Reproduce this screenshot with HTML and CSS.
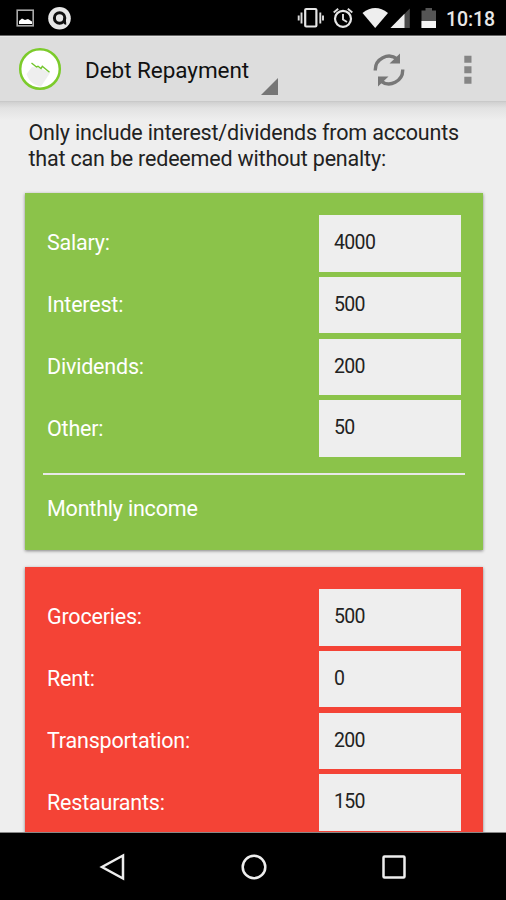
FILE: index.html
```html
<!DOCTYPE html>
<html lang="en">
<head>
<meta charset="utf-8">
<title>Debt Repayment</title>
<link rel="stylesheet" href="styles.css">
</head>
<body>
<div class="screen">
  <header class="status">
    <svg class="status-left" width="80" height="35" viewBox="0 0 80 35">
      <rect x="17.2" y="10.2" width="16" height="15.6" fill="none" stroke="#aaa" stroke-width="1.6"/>
      <path d="M19 24v-3l3-2.500 3 1.500 3-1 4 2.500v2.500z" fill="#fff"/>
      <circle cx="59.500" cy="18.300" r="11.300" fill="#e8e8e8"/>
      <circle cx="59.600" cy="18" r="5.200" fill="none" stroke="#111" stroke-width="3"/>
      <path d="M64.700 18v4q0 1.500 1.500 1.500" fill="none" stroke="#111" stroke-width="2.600"/>
    </svg>
    <svg class="status-icons" width="146" height="35" viewBox="293 0 146 35">
      <rect x="305.200" y="9" width="11.200" height="17.500" rx="1" fill="none" stroke="#e6e6e6" stroke-width="2.200"/>
      <path d="M301.500 12.500v11M298.700 15.500v5M320.300 12.500v11M323 15.500v5" stroke="#ddd" stroke-width="1.900"/>
      <circle cx="343" cy="18.800" r="8" fill="none" stroke="#e6e6e6" stroke-width="2.200"/>
      <path d="M343 14v5.500l4 2.500M333.700 12.500l4.500-3.700M352.300 12.500l-4.500-3.700" fill="none" stroke="#ddd" stroke-width="1.900"/>
      <path d="M362.500 13Q375.200 3 388 13L375.200 28z" fill="#eee"/>
      <path d="M409.800 8.500V28H390.500z" fill="#4a4a4a"/>
      <path d="M404.500 13.800V28H390.500z" fill="#eee"/>
      <path d="M421.500 10.500h4v-2.500h6.500v2.500h4V28h-14.500z" fill="#555"/>
      <path d="M421.500 21H436v7h-14.500z" fill="#f4f4f4"/>
    </svg>
    <span class="clock">10:18</span>
  </header>
  <nav class="appbar">
    <svg class="logo" width="44" height="44" viewBox="0 0 44 44">
      <circle cx="22" cy="22" r="19.800" fill="#fff" stroke="#7ccb2b" stroke-width="2.500"/>
      <path d="M14 20L8.500 27C11 35 17 38.500 23 39.500L32 26 22 21z" fill="#eee"/>
      <path d="M13.500 16l5 4 1.500-.7 3 2.200 1.300-2.200 7.200 6" fill="none" stroke="#72c52c" stroke-width="1.400"/>
    </svg>
    <div class="spinner">
      <span class="title">Debt Repayment</span>
      <svg class="corner" width="17" height="17" viewBox="0 0 17 17"><path d="M17 0V17H0z" fill="#767676"/></svg>
    </div>
    <svg class="refresh" width="34" height="36" viewBox="0 0 34 36">
      <path d="M3.300 18.500A13.700 13.700 0 0 1 25.500 7.200M30.700 17.500A13.700 13.700 0 0 1 8.500 28.800" fill="none" stroke="#777" stroke-width="3.400"/>
      <path d="M28 1.500V11.500H17.500zM6 34.500V24.500H16.500z" fill="#777"/>
    </svg>
    <svg class="overflow" width="8" height="30" viewBox="0 0 8 30"><path d="M.3.800h7.200v7H.3zM.3 11.300h7.200v7H.3zM.3 21.800h7.200v7H.3z" fill="#858585"/></svg>
  </nav>
  <main class="content">
    <p class="intro">Only include interest/dividends from accounts<br>that can be redeemed without penalty:</p>
    <section class="card income">
      <div class="row"><span class="label">Salary:</span><div class="field">4000</div></div>
      <div class="row"><span class="label">Interest:</span><div class="field">500</div></div>
      <div class="row"><span class="label">Dividends:</span><div class="field">200</div></div>
      <div class="row"><span class="label">Other:</span><div class="field">50</div></div>
      <div class="total">Monthly income</div>
    </section>
    <section class="card expenses">
      <div class="row"><span class="label">Groceries:</span><div class="field">500</div></div>
      <div class="row"><span class="label">Rent:</span><div class="field">0</div></div>
      <div class="row"><span class="label">Transportation:</span><div class="field">200</div></div>
      <div class="row"><span class="label">Restaurants:</span><div class="field">150</div></div>
    </section>
  </main>
  <footer class="navbar">
    <svg width="28" height="28" viewBox="0 0 28 28"><path d="M24 2.500V25.500L3 14z"/></svg>
    <svg width="28" height="28" viewBox="0 0 28 28"><circle cx="14" cy="14" r="11.300"/></svg>
    <svg width="28" height="28" viewBox="0 0 28 28"><rect x="3.500" y="3.500" width="21" height="21" rx="1"/></svg>
  </footer>
</div>
</body>
</html>
```
FILE: styles.css
```css
* { box-sizing: border-box; }
body { margin: 0; font-family: Roboto, "Liberation Sans", sans-serif; }
svg { display: block; flex: none; }
.screen { width: 506px; height: 900px; display: flex; flex-direction: column; overflow: hidden; background: #eee; }
.status { flex: none; height: 36px; background: #000; border-bottom: 1px solid #666; display: flex; }
.status-icons { margin-left: 213px; }
.clock { margin-left: 7px; color: #e8e8e8; font-size: 19.500px; font-weight: 500; line-height: 39px; letter-spacing: -.1px; white-space: nowrap; }
.appbar { flex: none; height: 66px; background: #ddd; display: flex; align-items: flex-start; border-top: 1px solid #e8e8e8; border-bottom: 1px solid #c9c9c9; }
.logo { margin: 10px 0 0 18px; }
.spinner { width: 193px; height: 59px; margin-left: 23px; display: flex; justify-content: space-between; align-items: flex-end; flex: none; }
.title { font-size: 22.500px; line-height: 30px; align-self: flex-start; margin-top: 18px; color: #111; letter-spacing: -.05px; white-space: nowrap; }
.corner { margin-bottom: 1px; }
.refresh { margin: 15px 0 0 94px; }
.overflow { margin: 18px 0 0 58px; }
.content { flex: 1; min-height: 0; overflow: hidden; padding: 18px 23px 0 24.500px; background: linear-gradient(#d0d0d0, #e2e2e2 6px, #eee 18px); }
.intro { margin: 0 0 21px 4px; font-size: 21.500px; line-height: 26px; letter-spacing: -.19px; color: #222; white-space: nowrap; }
.card { padding: 22px 22px 0 22.500px; box-shadow: 0 1px 3px rgba(0, 0, 0, .45); color: #fff; }
.income { height: 357px; background: #8bc34a; }
.expenses { height: 357px; margin-top: 17px; background: #f44336; }
.row { display: flex; justify-content: space-between; align-items: center; height: 56.500px; margin-bottom: 5.300px; }
.label, .total { font-size: 21.500px; line-height: 26px; letter-spacing: -.2px; }
.field { width: 142px; height: 56.500px; padding-left: 15px; background: #eee; color: #222; font-size: 19.500px; line-height: 56px; letter-spacing: -.65px; }
.total { margin: 16px -4px 0; padding: 21px 4px 0; border-top: 2px solid #e8e8e8; }
.navbar { flex: none; height: 68px; background: #000; border-top: 1px solid #888; display: flex; justify-content: space-between; padding: 20px 98px 0 99px; }
.navbar svg { fill: none; stroke: #eee; stroke-width: 2.500; }
```
